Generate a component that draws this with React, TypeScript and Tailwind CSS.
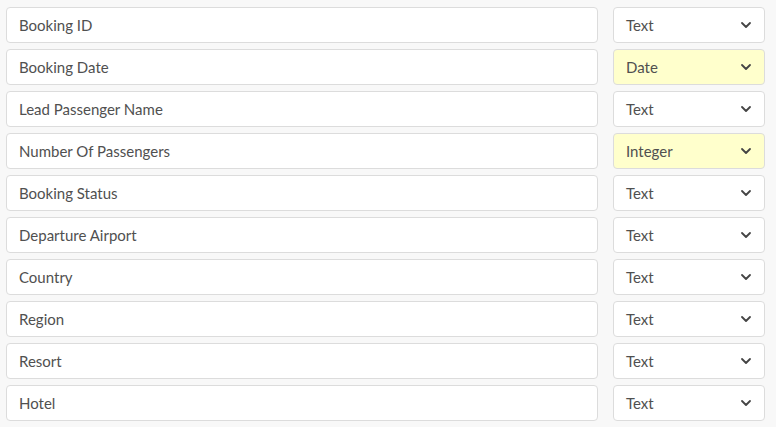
import { ChevronDown } from 'lucide-react'

const fields: { name: string; type: string; flagged?: boolean }[] = [
  { name: 'Booking ID', type: 'Text' },
  { name: 'Booking Date', type: 'Date', flagged: true },
  { name: 'Lead Passenger Name', type: 'Text' },
  { name: 'Number Of Passengers', type: 'Integer', flagged: true },
  { name: 'Booking Status', type: 'Text' },
  { name: 'Departure Airport', type: 'Text' },
  { name: 'Country', type: 'Text' },
  { name: 'Region', type: 'Text' },
  { name: 'Resort', type: 'Text' },
  { name: 'Hotel', type: 'Text' },
]

export default function App() {
  return (
    <div
      className="w-[776px] h-[427px] bg-[#f8f8f8] pt-[7px] pl-[6px] pr-[11px] flex flex-col gap-[6px] text-[15px] text-[#505050]"
      style={{ fontFamily: 'Lato, "Open Sans", sans-serif' }}
    >
      {fields.map(f => (
        <div key={f.name} className="flex gap-[15px]">
          {/* column name */}
          <div className="w-[592px] h-[36px] flex items-center px-[12px] bg-white border border-[#dcdcdc] rounded-[4px]">
            {f.name}
          </div>

          {/* type select */}
          <div
            className={`flex-1 h-[36px] flex items-center justify-between pl-[12px] pr-[10px] border border-[#dcdcdc] rounded-[4px] ${
              f.flagged ? 'bg-[#ffffcc]' : 'bg-white'
            }`}
          >
            <span>{f.type}</span>
            <ChevronDown size={16} strokeWidth={2.75} className="text-[#444]" />
          </div>
        </div>
      ))}
    </div>
  )
}
